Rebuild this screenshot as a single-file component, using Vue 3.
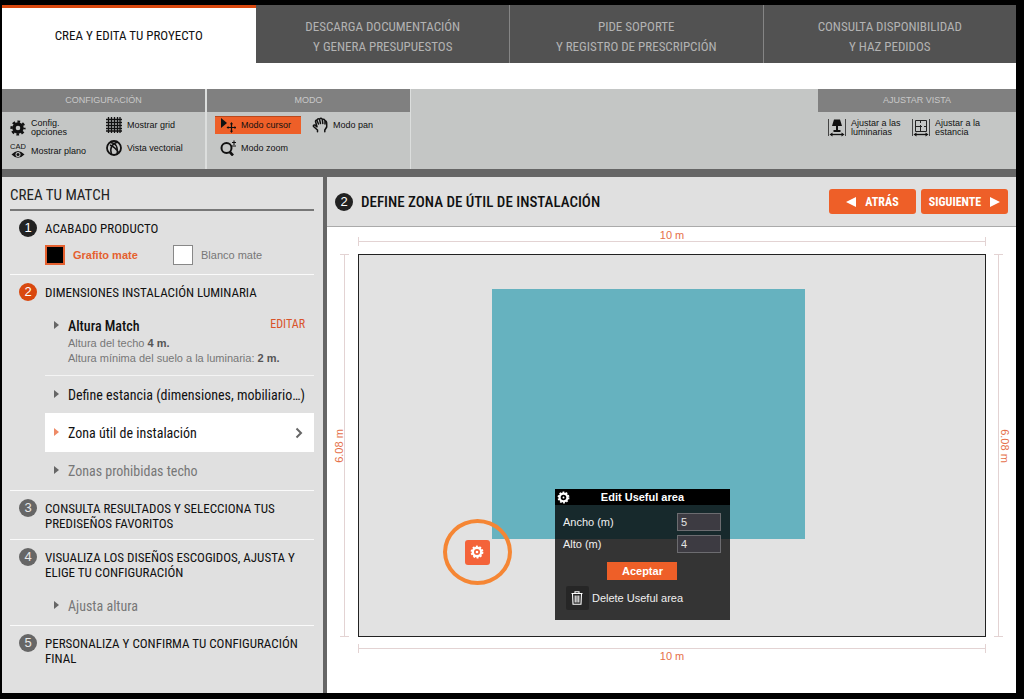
<script setup>
import { ref } from 'vue'

const tabs = [
  ['CREA Y EDITA TU PROYECTO'],
  ['DESCARGA DOCUMENTACIÓN', 'Y GENERA PRESUPUESTOS'],
  ['PIDE SOPORTE', 'Y REGISTRO DE PRESCRIPCIÓN'],
  ['CONSULTA DISPONIBILIDAD', 'Y HAZ PEDIDOS'],
]
const finish = ref('grafito')
const ancho = ref('5')
const alto = ref('4')
</script>

<template>
  <div class="app">
    <nav class="tabs">
      <a v-for="(lines, i) in tabs" :key="i" href="#" class="tab" :class="{ current: i === 0 }">
        <span v-for="line in lines" :key="line">{{ line }}</span>
      </a>
    </nav>

    <div class="ribbon">
      <section class="panel">
        <h2>CONFIGURACIÓN</h2>
        <div class="tools">
          <div class="tool-col low wide">
            <button class="tool">
              <svg class="ico" viewBox="0 0 16 16">
                <circle cx="8" cy="8" r="4" fill="none" stroke="#111" stroke-width="3.4" />
                <circle cx="8" cy="8" r="6.4" fill="none" stroke="#111" stroke-width="2.4" stroke-dasharray="2.7 2.326" stroke-dashoffset="1.35" />
              </svg>
              <span>Config.<br />opciones</span>
            </button>
            <button class="tool">
              <svg class="ico" viewBox="0 0 16 16">
                <text x="8" y="6" text-anchor="middle" font-family="Liberation Sans" font-size="7.5" fill="#111">CAD</text>
                <path d="M1.5 11.5Q8 4.500 14.500 11.500Q8 18 1.500 11.500Z" fill="#111" />
                <circle cx="8" cy="11.400" r="2.500" fill="#c4c6c5" />
                <circle cx="8" cy="11.400" r="1.500" fill="#111" />
              </svg>
              <span>Mostrar plano</span>
            </button>
          </div>
          <div class="tool-col">
            <button class="tool">
              <svg class="ico" viewBox="0 0 16 16">
                <path d="M2.500 0V16M5.500 0V16M8.500 0V16M11.500 0V16M14 0V16M0 2.500H16M0 5.500H16M0 8.500H16M0 11.500H16M0 14H16" stroke="#111" stroke-width="1.300" />
              </svg>
              <span>Mostrar grid</span>
            </button>
            <button class="tool">
              <svg class="ico" viewBox="0 0 16 16" fill="none" stroke="#111">
                <circle cx="8" cy="8" r="7" stroke-width="1.800" />
                <path d="M4.500 2.500Q13 3.500 11 14.500M11.500 2Q2.500 5 5.500 14.500M4 5Q9 7 12.500 12.500" stroke-width="1.400" />
              </svg>
              <span>Vista vectorial</span>
            </button>
          </div>
        </div>
      </section>

      <section class="panel">
        <h2>MODO</h2>
        <div class="tools">
          <div class="tool-col mode">
            <button class="tool on">
              <svg class="ico" viewBox="0 0 16 16">
                <path d="M1 1L7 6L1 11Z" fill="#111" />
                <path d="M11.500 6V15M7 10.500H16" stroke="#111" stroke-width="1.200" />
                <path d="M11.500 5L13 7.300H10ZM11.500 16L13 13.700H10ZM6.500 10.500L8.500 9V12ZM16.500 10.500L14.500 9V12Z" fill="#111" />
              </svg>
              <span>Modo cursor</span>
            </button>
            <button class="tool">
              <svg class="ico" viewBox="0 0 16 16" fill="none" stroke="#111">
                <circle cx="6.500" cy="8" r="5" stroke-width="2" />
                <path d="M9.800 12L13 15.500" stroke-width="2.600" />
                <path d="M14 0.500V5M12 2.500H16M12 6H16" stroke-width="1.100" />
              </svg>
              <span>Modo zoom</span>
            </button>
          </div>
          <div class="tool-col">
            <button class="tool">
              <svg class="ico" viewBox="0 0 16 16" fill="none" stroke="#111" stroke-width="1.500" stroke-linecap="round" stroke-linejoin="round">
                <path d="M5.500 14.800V13L1.500 9.500Q1 7.800 2.800 8L5 9.800L3.500 4.500Q3.500 2.800 5 3.500L6.500 7M5 3.300Q5.500 1 7.500 2.300L8.500 6.500M7.600 2Q9.200 0.500 10.300 2.300L10.800 6.500M10.500 2.600Q12.400 1.500 13 4L13 7M13 4.200Q14.800 3.500 14.700 7V10L12.800 13V14.800" />
              </svg>
              <span>Modo pan</span>
            </button>
          </div>
        </div>
      </section>

      <section class="panel fit">
        <h2>AJUSTAR VISTA</h2>
        <div class="tools">
          <div class="tool-col low fitcol">
            <button class="tool">
              <svg class="ico big" viewBox="0 0 18 18">
                <path d="M0.500 0V17M17.500 0V17" stroke="#444" stroke-width="1" />
                <path d="M6 0.500H12L14 7H4ZM8 7H10V11H12.500V13H5.500V11H8Z" fill="#111" />
                <path d="M3 15.500H15" stroke="#111" stroke-width="1.300" />
                <path d="M1.500 15.500L4.500 13.500V17.500ZM16.500 15.500L13.500 13.500V17.500Z" fill="#111" />
              </svg>
              <span>Ajustar a las<br />luminarias</span>
            </button>
          </div>
          <div class="tool-col low">
            <button class="tool">
              <svg class="ico big" viewBox="0 0 18 18">
                <path d="M0.500 0V17M17.500 0V17" stroke="#444" stroke-width="1" />
                <path d="M3.500 1.500H14.500V12.500H3.500ZM8.500 1.500V4M8.500 6V12.500M3.500 7.500H10M12 7.500H14.500" fill="none" stroke="#222" stroke-width="1" />
                <path d="M3 15.500H15" stroke="#111" stroke-width="1.300" />
                <path d="M1.500 15.500L4.500 13.500V17.500ZM16.500 15.500L13.500 13.500V17.500Z" fill="#111" />
              </svg>
              <span>Ajustar a la<br />estancia</span>
            </button>
          </div>
        </div>
      </section>
    </div>

    <div class="body">
      <aside class="side">
        <h1>CREA TU MATCH</h1>

        <section class="step">
          <div class="head"><i class="badge dark">1</i><h3>ACABADO PRODUCTO</h3></div>
          <div class="swatches">
            <label :class="{ picked: finish === 'grafito' }">
              <input v-model="finish" type="radio" name="finish" value="grafito" class="black" />Grafito mate
            </label>
            <label :class="{ picked: finish === 'blanco' }">
              <input v-model="finish" type="radio" name="finish" value="blanco" class="white" />Blanco mate
            </label>
          </div>
        </section>

        <section class="step">
          <div class="head"><i class="badge orange">2</i><h3>DIMENSIONES INSTALACIÓN LUMINARIA</h3></div>
          <div class="sub first">
            <div class="altura">
              <div class="altura-top"><b class="name">Altura Match</b><a href="#" class="edit">EDITAR</a></div>
              <p>Altura del techo <b>4 m.</b></p>
              <p>Altura mínima del suelo a la luminaria: <b>2 m.</b></p>
            </div>
            <button class="item ink">Define estancia (dimensiones, mobiliario…)</button>
            <button class="item active">
              Zona útil de instalación
              <svg class="chev" viewBox="0 0 8 12"><path d="M1.500 1.500L6 6L1.500 10.500" fill="none" stroke="#666" stroke-width="2" /></svg>
            </button>
            <button class="item">Zonas prohibidas techo</button>
          </div>
        </section>

        <section class="step padded">
          <div class="head"><i class="badge">3</i><h3>CONSULTA RESULTADOS Y SELECCIONA TUS PREDISEÑOS FAVORITOS</h3></div>
        </section>

        <section class="step">
          <div class="head"><i class="badge">4</i><h3>VISUALIZA LOS DISEÑOS ESCOGIDOS, AJUSTA Y ELIGE TU CONFIGURACIÓN</h3></div>
          <div class="sub"><button class="item">Ajusta altura</button></div>
        </section>

        <section class="step last">
          <div class="head"><i class="badge">5</i><h3>PERSONALIZA Y CONFIRMA TU CONFIGURACIÓN FINAL</h3></div>
        </section>
      </aside>

      <main class="main">
        <header class="bar">
          <i class="badge dark">2</i>
          <h2>DEFINE ZONA DE ÚTIL DE INSTALACIÓN</h2>
          <button class="nav">
            <svg viewBox="0 0 10 10"><path d="M0 5L10 0V10Z" fill="#fff" /></svg>ATRÁS
          </button>
          <button class="nav next">
            SIGUIENTE<svg viewBox="0 0 10 10"><path d="M10 5L0 0V10Z" fill="#fff" /></svg>
          </button>
        </header>

        <div class="stage">
          <div class="dim h top"><span>10 m</span></div>
          <div class="dim v left"><span>6.08 m</span></div>
          <div class="room">
            <div class="area"></div>
            <div class="ring">
              <button class="gear-btn" aria-label="Editar">
                <svg viewBox="0 0 14 14">
                  <circle cx="7" cy="7" r="4.200" fill="none" stroke="#fff" stroke-width="2.400" />
                  <circle cx="7" cy="7" r="5.500" fill="none" stroke="#fff" stroke-width="1.800" stroke-dasharray="1.900 1.556" />
                  <circle cx="7" cy="7" r="1.300" fill="#fff" />
                </svg>
              </button>
            </div>
            <form class="popup" @submit.prevent>
              <div class="popup-head">
                <svg viewBox="0 0 14 14">
                  <circle cx="7" cy="7" r="4.200" fill="none" stroke="#fff" stroke-width="2.400" />
                  <circle cx="7" cy="7" r="5.500" fill="none" stroke="#fff" stroke-width="1.800" stroke-dasharray="1.900 1.556" />
                  <circle cx="7" cy="7" r="1" fill="#fff" />
                </svg>
                Edit Useful area
              </div>
              <div class="field"><label for="ancho">Ancho (m)</label><input id="ancho" v-model="ancho" type="text" /></div>
              <div class="field"><label for="alto">Alto (m)</label><input id="alto" v-model="alto" type="text" /></div>
              <button class="ok">Aceptar</button>
              <button class="delete" type="button">
                <span class="trash">
                  <svg viewBox="0 0 12 14" fill="none" stroke="#fff" stroke-width="1.100">
                    <path d="M0.500 2.500H11.500M4 2.500V0.700H8V2.500M1.500 2.500L2 13.300H10L10.500 2.500M4.200 4.500V11.500M6 4.500V11.500M7.800 4.500V11.500" />
                  </svg>
                </span>
                Delete Useful area
              </button>
            </form>
          </div>
          <div class="dim v right"><span>6.08 m</span></div>
          <div class="dim h bottom"><span>10 m</span></div>
        </div>
      </main>
    </div>
  </div>
</template>

<style>
body {
  margin: 0;
  background: #000;
}
</style>

<style scoped>
.app {
  --narrow: 'Liberation Sans Narrow', 'Arial Narrow', 'Roboto Condensed', 'Liberation Sans', sans-serif;
  box-sizing: border-box;
  min-height: 100vh;
  display: flex;
  flex-direction: column;
  padding: 5px 8px 6px 2px;
  background: #000;
  font-family: 'Liberation Sans', Arial, sans-serif;
  font-size: 11px;
  color: #222;
}
h1, h2, h3, p { margin: 0; font-weight: normal; }
button {
  font: inherit;
  color: inherit;
  border: 0;
  padding: 0;
  background: none;
  text-align: left;
  cursor: pointer;
}
a { text-decoration: none; }
svg { display: block; flex: none; }

.tabs {
  display: grid;
  grid-template-columns: repeat(4, 1fr);
  padding-bottom: 26px;
  background: #fff;
}
.tab {
  box-sizing: border-box;
  height: 58px;
  display: flex;
  flex-direction: column;
  align-items: center;
  justify-content: center;
  padding-top: 6px;
  border-left: 1px solid #858585;
  background: #525252;
  color: #b3b3b3;
  font: 13px/20px var(--narrow);
}
.tab:nth-child(2) { border-left-color: #525252; }
.tab.current {
  padding-top: 0;
  border-left: 0;
  border-top: 3px solid #d9480f;
  background: #fff;
  color: #111;
}

.ribbon {
  display: flex;
  border-bottom: 8px solid #666;
  background: #c4c6c5;
}
.panel {
  width: 203px;
  height: 80px;
  border-right: 2px solid #dcdedd;
}
.panel:nth-child(2) { border-right-width: 1px; }
.panel h2 {
  background: #808080;
  color: #c9c9c9;
  font-size: 9px;
  line-height: 23px;
  text-align: center;
}
.panel.fit { width: 198px; margin-left: auto; border-right: 0; }
.tools { display: flex; padding: 4px 8px; }
.tool-col { display: flex; flex-direction: column; gap: 5px; }
.tool-col.low { padding-top: 3px; }
.tool-col.wide { width: 96px; }
.tool-col.mode { width: 97px; }
.tool-col.fitcol { width: 84px; padding-left: 2px; }
.tool {
  height: 18px;
  display: flex;
  align-items: center;
  gap: 5px;
  color: #111;
  font-size: 9px;
  line-height: 9px;
  white-space: nowrap;
}
.mode .tool { width: 86px; box-sizing: border-box; padding-left: 5px; }
.tool.on { background: #ee5f28; box-shadow: inset 0 1px #b8481c; }
.ico { width: 16px; height: 16px; }
.ico.big { width: 18px; height: 18px; }

.body { flex: 1; display: flex; }
.side {
  box-sizing: border-box;
  width: 325px;
  padding: 0 9px 0 8px;
  border-right: 4px solid #666;
  background: #e0e0e0;
}
.side h1 {
  padding-top: 5px;
  border-bottom: 2px solid #777;
  color: #222;
  font: 15px/27px var(--narrow);
}
.step {
  padding: 8px 0 0 9px;
  border-bottom: 1px solid #fafafa;
}
.step.padded { padding-bottom: 8px; }
.step.last { border-bottom: 0; }
.head { display: flex; gap: 8px; }
.head h3 {
  padding-top: 2px;
  color: #111;
  font: 13px/15px var(--narrow);
}
.badge {
  flex: none;
  width: 18px;
  height: 18px;
  border-radius: 50%;
  background: #666;
  color: #e8e8e8;
  font-size: 13px;
  font-style: normal;
  line-height: 18px;
  text-align: center;
}
.badge.dark { background: #222; color: #fff; }
.badge.orange { background: #d9480f; color: #fff; }
.swatches {
  display: grid;
  grid-template-columns: 128px 1fr;
  padding: 8px 0 9px 26px;
}
.swatches label {
  display: flex;
  align-items: center;
  gap: 8px;
  color: #777;
}
.swatches label.picked { color: #e5602f; font-weight: bold; }
.swatches input {
  appearance: none;
  box-sizing: border-box;
  width: 20px;
  height: 20px;
  margin: 0;
  border: 1px solid #888;
}
.swatches .black { background: #000; }
.swatches .white { background: #fff; }
.swatches .picked input { border: 2px solid #e5602f; }

.sub { padding: 7px 0 0 26px; }
.sub.first { padding-top: 16px; }
.altura {
  padding: 0 9px 9px 23px;
  border-bottom: 1px solid #f4f4f4;
  color: #777;
}
.altura p { line-height: 15px; }
.altura p b { color: #555; }
.altura-top { display: flex; justify-content: space-between; margin-bottom: 1px; position: relative; }
.name { color: #111; font: 500 14px/18px var(--narrow); }
.edit { color: #d9532a; font: 12px/14px var(--narrow); }
.item {
  position: relative;
  box-sizing: border-box;
  width: 100%;
  height: 38px;
  display: flex;
  align-items: center;
  justify-content: space-between;
  padding: 0 11px 0 23px;
  color: #777;
  font: 14px/18px var(--narrow);
  white-space: nowrap;
}
.item.ink { height: 37px; color: #111; padding-right: 0; }
.item.active { height: 39px; background: #fff; color: #111; }
.item::before,
.altura-top::before {
  content: '';
  position: absolute;
  left: 9px;
  top: calc(50% - 5px);
  border: 4px solid transparent;
  border-left: 5px solid #666;
  border-right: 0;
}
.altura-top::before { left: -14px; }
.item.active::before { border-left-color: #ee8a66; }
.chev { width: 8px; height: 12px; }

.main {
  flex: 1;
  display: flex;
  flex-direction: column;
  background: #fff;
}
.bar {
  height: 49px;
  display: flex;
  align-items: center;
  padding: 0 8px;
  border-bottom: 1px solid #aaa;
  background: #e0e0e0;
}
.bar h2 {
  flex: 1;
  padding-left: 8px;
  color: #111;
  font: 500 15px/18px var(--narrow);
}
.nav {
  width: 87px;
  height: 25px;
  display: flex;
  align-items: center;
  justify-content: center;
  gap: 9px;
  border-radius: 3px;
  background: #ee5f28;
  color: #fff;
  font: bold 12px/18px var(--narrow);
}
.nav svg { width: 10px; height: 10px; }
.nav.next { margin-left: 5px; }

.stage {
  flex: 1;
  display: grid;
  grid-template-columns: 31px 1fr 30px;
  grid-template-rows: 27px minmax(383px, 1fr) 56px;
}
.dim {
  position: relative;
  box-sizing: border-box;
  border: 0 solid #e3d3d3;
  color: #e5704a;
  font-size: 11px;
  line-height: 12px;
}
.dim::before { content: ''; position: absolute; background: #e3d3d3; }
.dim.h { grid-column: 2; height: 9px; border-width: 0 1px; }
.dim.h::before { left: 0; right: 0; top: 4px; height: 1px; }
.dim.v { grid-row: 2; width: 9px; border-width: 1px 0; }
.dim.v::before { top: 0; bottom: 0; left: 4px; width: 1px; }
.dim.top { grid-row: 1; margin-top: 10px; }
.dim.bottom { grid-row: 3; margin-top: 7px; }
.dim.left { grid-column: 1; margin-left: 13px; }
.dim.right { grid-column: 3; margin-left: 8px; }
.dim span { position: absolute; white-space: nowrap; }
.dim.h span { left: 50%; transform: translateX(-50%); }
.dim.top span { bottom: 5px; }
.dim.bottom span { top: 6px; }
.dim.v span { top: 50%; writing-mode: vertical-rl; transform: translateY(-50%); }
.dim.left span { right: 4px; transform: translateY(-50%) rotate(180deg); }
.dim.right span { left: 5px; }

.room {
  grid-area: 2 / 2;
  position: relative;
  border: 1px solid #222;
  background: #e2e2e2;
}
.area {
  position: absolute;
  left: 21.2%;
  top: 8.8%;
  width: 50.1%;
  height: 65.8%;
  background: #66b2bf;
}
.ring {
  position: absolute;
  left: 13.4%;
  top: 69.4%;
  box-sizing: border-box;
  width: 69px;
  height: 66px;
  display: flex;
  align-items: center;
  justify-content: center;
  border: 4px solid #f58634;
  border-radius: 50%;
}
.gear-btn {
  width: 25px;
  height: 25px;
  display: flex;
  align-items: center;
  justify-content: center;
  border-radius: 3px;
  background: #f4633a;
}
.gear-btn svg { width: 14px; height: 14px; }
.popup {
  position: absolute;
  left: 31.3%;
  top: 61.4%;
  width: 175px;
  padding-bottom: 10px;
  background: rgba(0, 0, 0, 0.77);
  color: #f0f0f0;
}
.popup-head {
  position: relative;
  margin-bottom: 8px;
  background: #000;
  color: #fff;
  font-weight: bold;
  line-height: 16px;
  text-align: center;
}
.popup-head svg { position: absolute; left: 2px; top: 2px; width: 13px; height: 13px; }
.field {
  display: flex;
  align-items: center;
  justify-content: space-between;
  margin-bottom: 4px;
  padding: 0 9px 0 8px;
}
.field input {
  box-sizing: border-box;
  width: 44px;
  height: 18px;
  padding: 0 3px;
  border: 1px solid #6c6c70;
  background: #3d3b42;
  color: #e4e4e4;
  font: inherit;
}
.ok {
  display: block;
  width: 70px;
  height: 18px;
  margin: 9px auto 6px;
  background: #ee5f28;
  color: #fff;
  font-weight: bold;
  text-align: center;
}
.delete {
  display: flex;
  align-items: center;
  gap: 3px;
  margin-left: 11px;
}
.trash {
  width: 23px;
  height: 24px;
  display: flex;
  align-items: center;
  justify-content: center;
  border-radius: 2px;
  background: #262626;
}
.trash svg { width: 12px; height: 14px; }
</style>
